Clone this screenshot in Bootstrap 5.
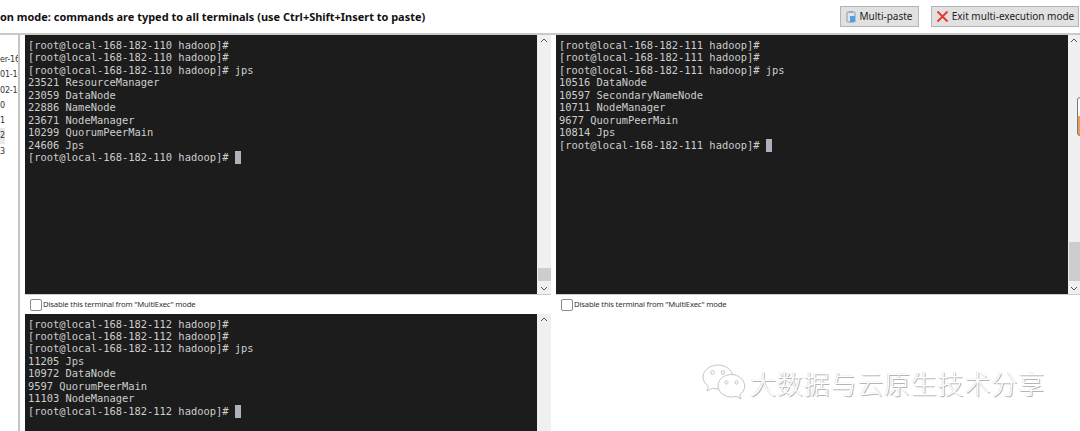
<!DOCTYPE html>
<html lang="en">
<head>
<meta charset="utf-8">
<title>MultiExec</title>
<link href="https://cdn.jsdelivr.net/npm/bootstrap@5.3.0/dist/css/bootstrap.min.css" rel="stylesheet">
<style>
html,body{height:431px;overflow:hidden;background:#fff}
.shell{height:431px;position:relative;overflow:hidden}
.topbar{height:35px;border-bottom:2px solid #c9c9c9;padding:0 1px 0 0}
.modetext{font:bold 10.96px/1 "Noto Sans",sans-serif;color:#111;white-space:nowrap;padding-top:1px}
.btnrow{column-gap:12px}
.tool-btn{height:21px;padding:0;font:10px/19px "Noto Sans",sans-serif;background:#e1e1e1;border:1px solid #b4b4b4;border-radius:0;color:#222;display:flex;align-items:center;gap:3px;white-space:nowrap}
.btn-paste{width:79px;justify-content:center}
.btn-exit{width:148px;justify-content:center}
.side{width:20px;border-right:2px solid #c4c4c4;padding-top:17px;overflow:hidden;flex:none}
.side-item{height:15.3px;font:8px/15px "DejaVu Sans",sans-serif;letter-spacing:-.02em;color:#333;white-space:nowrap;overflow:hidden}
.side-item.sel{background:#e9e9e9;width:5px}
.panes{display:grid;grid-template-columns:526px 524px;grid-template-rows:260px 19px 117px;column-gap:5px;margin-left:5px;flex:1}
.termwrap{display:flex;min-height:0;overflow:hidden;border-bottom:1px solid #ccc}
.termwrap.last{border-bottom:0}
.term{flex:1;background:#1c1c1c;color:#cdcdcd;font:10.42px/12.47px "DejaVu Sans Mono",monospace;padding:4px 3px;white-space:pre;overflow:hidden}
.term.lower{padding-top:3.500px}
.cur{display:inline-block;width:6px;height:13px;background:#b0b0bc;vertical-align:-3px}
.vbar{width:14px;background:#f0f0f0;position:relative;flex:none}
.vbar.narrow{width:12px}
.vbar svg{position:absolute;left:50%;margin-left:-4px}
.arr-up{top:3px}
.arr-down{bottom:3px}
.vthumb{position:absolute;left:1px;right:0;background:#cdcdcd}
.execrow{display:flex;align-items:center;gap:1px;padding-left:5px;padding-top:1px;font:7.7px/1 "Noto Sans",sans-serif;letter-spacing:-.17px;color:#333}
.chk{width:12px;height:12px;border:1px solid #8a8a8a;border-radius:2px;background:#fff;flex:none}
.mini{position:absolute;right:-8px;top:97px;width:11px;height:39px;border:1px solid #777;border-radius:3px;background:linear-gradient(#fff 0 50%,#ee9a5a 50% 100%)}
.wm{position:absolute;left:702px;top:364px;display:flex;align-items:center;gap:4px}
.wmtext{font:26px/1 "Noto Sans CJK SC",sans-serif;font-weight:300;letter-spacing:.8px;color:#fff;text-shadow:1px 1px 0 #b5b5b5,-.5px -.5px 0 #d5d5d5;white-space:nowrap}
</style>
</head>
<body>
<div class="shell d-flex flex-column">
  <div class="topbar d-flex align-items-center justify-content-between">
    <div class="modetext">on mode: commands are typed to all terminals (use Ctrl+Shift+Insert to paste)</div>
    <div class="d-flex btnrow">
      <button type="button" class="btn tool-btn btn-paste"><svg width="10" height="12" viewBox="0 0 10 12"><rect x="1" y="1" width="8" height="10" rx="1" fill="#dfe6ee" stroke="#8b99a8"/><rect x="3" y="0" width="4" height="2" fill="#9aa7b5"/><rect x="4" y="5" width="5" height="6" fill="#4da0e6"/></svg>Multi-paste</button>
      <button type="button" class="btn tool-btn btn-exit"><svg width="13" height="13" viewBox="0 0 13 13"><path d="M1.500 1.500l10 10M11.500 1.500l-10 10" stroke="#e8352b" stroke-width="1.800" fill="none"/></svg>Exit multi-execution mode</button>
    </div>
  </div>
  <div class="d-flex flex-grow-1" style="min-height:0">
    <div class="side">
      <div class="side-item">er-16</div>
      <div class="side-item">01-16</div>
      <div class="side-item">02-16</div>
      <div class="side-item">0</div>
      <div class="side-item">1</div>
      <div class="side-item sel">2</div>
      <div class="side-item">3</div>
    </div>
    <div class="panes">
      <div class="termwrap">
<div class="term">[root@local-168-182-110 hadoop]#
[root@local-168-182-110 hadoop]#
[root@local-168-182-110 hadoop]# jps
23521 ResourceManager
23059 DataNode
22886 NameNode
23671 NodeManager
10299 QuorumPeerMain
24606 Jps
[root@local-168-182-110 hadoop]# <span class="cur"></span></div>
        <div class="vbar">
          <svg class="arr-up" width="8" height="5" viewBox="0 0 8 5"><path d="M1 4l3-3 3 3" stroke="#555" fill="none"/></svg>
          <div class="vthumb" style="top:233px;height:13px"></div>
          <svg class="arr-down" width="8" height="5" viewBox="0 0 8 5"><path d="M1 1l3 3 3-3" stroke="#555" fill="none"/></svg>
        </div>
      </div>
      <div class="termwrap">
<div class="term">[root@local-168-182-111 hadoop]#
[root@local-168-182-111 hadoop]#
[root@local-168-182-111 hadoop]# jps
10516 DataNode
10597 SecondaryNameNode
10711 NodeManager
9677 QuorumPeerMain
10814 Jps
[root@local-168-182-111 hadoop]# <span class="cur"></span></div>
        <div class="vbar narrow">
          <svg class="arr-up" width="8" height="5" viewBox="0 0 8 5"><path d="M1 4l3-3 3 3" stroke="#555" fill="none"/></svg>
          <div class="vthumb" style="top:207px;height:39px"></div>
          <svg class="arr-down" width="8" height="5" viewBox="0 0 8 5"><path d="M1 1l3 3 3-3" stroke="#555" fill="none"/></svg>
        </div>
      </div>
      <div class="execrow"><span class="chk"></span>Disable this terminal from "MultiExec" mode</div>
      <div class="execrow"><span class="chk"></span>Disable this terminal from "MultiExec" mode</div>
      <div class="termwrap last">
<div class="term lower">[root@local-168-182-112 hadoop]#
[root@local-168-182-112 hadoop]#
[root@local-168-182-112 hadoop]# jps
11205 Jps
10972 DataNode
9597 QuorumPeerMain
11103 NodeManager
[root@local-168-182-112 hadoop]# <span class="cur"></span></div>
        <div class="vbar">
          <svg class="arr-up" width="8" height="5" viewBox="0 0 8 5"><path d="M1 4l3-3 3 3" stroke="#555" fill="none"/></svg>
        </div>
      </div>
      <div></div>
    </div>
  </div>
  <div class="mini"></div>
  <div class="wm">
    <svg width="44" height="38" viewBox="0 0 44 38" fill="#fff" stroke="#bdbdbd" stroke-width=".9">
      <path d="M16 1C8 1 1 6.500 1 13c0 3.800 2.200 7 5.500 9.300L5 27l5.600-2.800c1.700.5 3.400.8 5.400.8 1 0 2-.1 3-.3" />
      <path d="M16 1c7 0 13.200 4.200 14.600 9.800"/>
      <circle cx="10.500" cy="8.500" r="1.800"/><circle cx="21" cy="8.500" r="1.800"/>
      <path d="M29.500 10.500c-7.500 0-13.500 5-13.500 11.200S22 33 29.500 33c1.700 0 3.200-.3 4.700-.7l4.800 2.700-1.300-4.300c3-2 5-5.100 5-8.300 0-6.400-5.900-11.900-13.200-11.900z"/>
      <circle cx="24.500" cy="18.500" r="1.600"/><circle cx="34.500" cy="18.500" r="1.600"/>
    </svg>
    <div class="wmtext">大数据与云原生技术分享</div>
  </div>
</div>
<script src="https://cdn.jsdelivr.net/npm/bootstrap@5.3.0/dist/js/bootstrap.bundle.min.js"></script>
</body>
</html>
